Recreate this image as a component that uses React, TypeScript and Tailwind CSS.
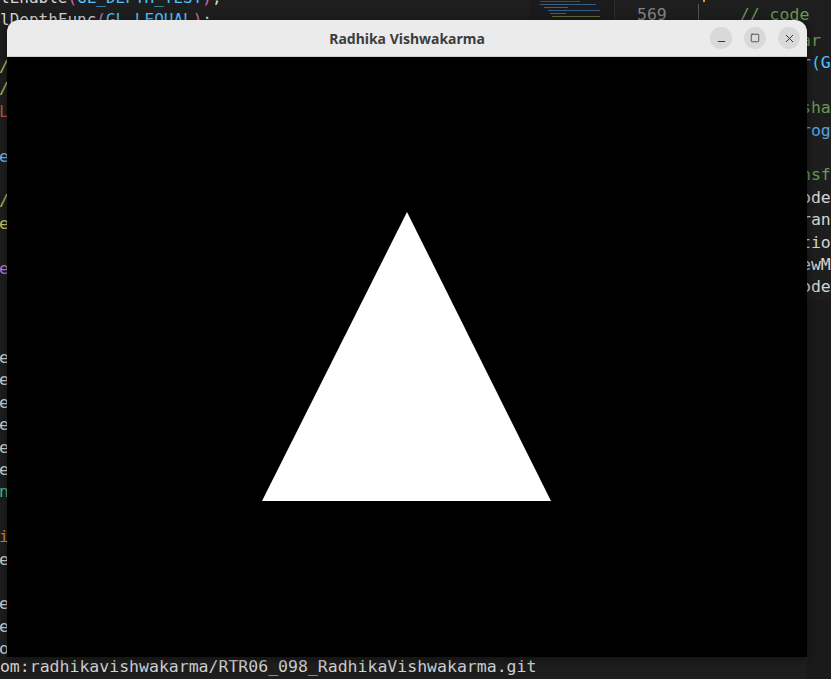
import { Minus, Square, X } from "lucide-react";

type Line = { text: string; color: string } | null;

// editor text peeking out at the left of the window, one entry per line
const LEFT: Line[] = [
  { text: "/", color: "#b5c25a" },
  { text: "/", color: "#b5c25a" },
  { text: "L", color: "#c0533f" },
  null,
  { text: "e", color: "#7cb7e8" },
  null,
  { text: "/", color: "#b5c25a" },
  { text: "e", color: "#d4c060" },
  null,
  { text: "e", color: "#c678dd" },
  null,
  null,
  null,
  { text: "e", color: "#d4d4d4" },
  { text: "e", color: "#d4d4d4" },
  { text: "e", color: "#d4d4d4" },
  { text: "e", color: "#d4d4d4" },
  { text: "e", color: "#d4d4d4" },
  { text: "e", color: "#d4d4d4" },
  { text: "n:", color: "#3fc48a" },
  { text: " (", color: "#5aa3e0" },
  { text: "i(", color: "#d08a2a" },
  { text: "e:", color: "#d4d4d4" },
  { text: " (", color: "#5aa3e0" },
  { text: "e(", color: "#d4d4d4" },
  { text: "e.", color: "#d4d4d4" },
  { text: "o.", color: "#d4d4d4" },
];

const RIGHT: Line[] = [
  { text: "ar (", color: "#6a9955" },
  { text: "r(G", color: "#4fc1ff" },
  null,
  { text: "sha", color: "#6a9955" },
  { text: "rog", color: "#5aa3e0" },
  null,
  { text: "nsfo", color: "#6a9955" },
  { text: "odel", color: "#d4d4d4" },
  { text: "ran", color: "#d4d4d4" },
  { text: "tio", color: "#d4d4d4" },
  { text: "ewM", color: "#d4d4d4" },
  { text: "odel", color: "#d4d4d4" },
];

const mono = "font-['DejaVu_Sans_Mono',monospace] text-[16.5px] whitespace-pre";

function CodeColumn({ lines, className }: { lines: Line[]; className: string }) {
  return (
    <div className={`absolute flex flex-col leading-[22.4px] ${mono} ${className}`}>
      {lines.map((l, i) => (
        <span key={i} className="h-[22.4px]" style={l ? { color: l.color } : undefined}>
          {l ? l.text : " "}
        </span>
      ))}
    </div>
  );
}

function Minimap() {
  const rows = [
    [10, 40, "#2c4f74"],
    [10, 56, "#355d86"],
    [14, 24, "#405f80"],
    [18, 52, "#355d86"],
    [20, 16, "#405f80"],
    [22, 48, "#5c6a44"],
  ] as const;
  return (
    <div className="absolute left-[530px] top-0 flex h-[20px] w-[84px] flex-col gap-[2px] bg-[#1b1b1b] pt-[1px]">
      {rows.map(([ml, w, c], i) => (
        <div key={i} className="h-[1px]" style={{ marginLeft: ml, width: w, background: c }} />
      ))}
    </div>
  );
}

function TitleButton({ children }: { children: React.ReactNode }) {
  return (
    <div className="flex h-[22px] w-[22px] items-center justify-center rounded-full bg-[#d9d9d9] text-[#2e2e2e]">
      {children}
    </div>
  );
}

function Window() {
  return (
    <div className="absolute left-[7px] top-[20px] flex w-[800px] flex-col overflow-hidden rounded-t-[12px] shadow-[0_2px_12px_rgba(0,0,0,0.45)]">
      <div className="flex h-[37px] items-center border-b border-[#cfcfcf] bg-[#ebebeb] pr-[7px]">
        <div className="w-[97px]" />
        <span className="flex-1 text-center text-[14px] font-bold text-[#3d3d3d] font-['Noto_Sans',sans-serif]">
          Radhika Vishwakarma
        </span>
        <div className="flex w-[90px] justify-end gap-[12px]">
          <TitleButton>
            <Minus size={11} strokeWidth={2} className="mt-[7px]" />
          </TitleButton>
          <TitleButton>
            <Square size={10} strokeWidth={1.8} />
          </TitleButton>
          <TitleButton>
            <X size={13} strokeWidth={1.8} />
          </TitleButton>
        </div>
      </div>
      <div className="h-[600px] bg-black">
        <svg width="800" height="600" className="block">
          <polygon points="400,155 255,444 544,444" fill="#ffffff" />
        </svg>
      </div>
    </div>
  );
}

export default function App() {
  return (
    <div className="relative h-[679px] w-[831px] overflow-hidden bg-[#1e1e1e]">
      {/* top editor lines, mostly hidden by the window */}
      <div className={`absolute left-0 top-[-13px] flex flex-col leading-[22px] text-[#d4d4d4] ${mono} text-[16px]`}>
        <span>
          lEnable<span className="text-[#d16fb0]">(</span>
          <span className="text-[#4fc1ff]">GL_DEPTH_TEST</span>
          <span className="text-[#d16fb0]">)</span>;
        </span>
        <span>
          lDepthFunc<span className="text-[#d16fb0]">(</span>
          <span className="text-[#4fc1ff]">GL_LEQUAL</span>
          <span className="text-[#d16fb0]">)</span>;
        </span>
      </div>

      <Minimap />
      {/* gutter of the second editor pane */}
      <div className="absolute left-[614px] top-0 flex h-[20px] items-start border-l border-[#2c2c2c] pl-[22px] pt-[4px] leading-[22px]">
        <span className={`${mono} text-[#858585]`}>569</span>
        <div className="ml-[31px] h-[16px] w-[1px] bg-[#555]" />
        <div className="-mt-[4px] ml-[4px] h-[2px] w-[2px] bg-[#e0a800]" />
        <span className={`${mono} ml-[35px] text-[#6a9955]`}>// code</span>
      </div>

      <CodeColumn lines={LEFT} className="left-[-1px] top-[56px]" />
      <CodeColumn lines={RIGHT} className="left-[801px] top-[30px]" />
      <div className="absolute left-[807px] top-[300px] h-[379px] w-[24px] bg-[#1a1a1a]" />

      {/* terminal line under the window */}
      <span className={`absolute left-[-10px] top-[656px] leading-[22px] text-[#d4d4d4] ${mono}`}>
        com:radhikavishwakarma/RTR06_098_RadhikaVishwakarma.git
      </span>

      <Window />
    </div>
  );
}
